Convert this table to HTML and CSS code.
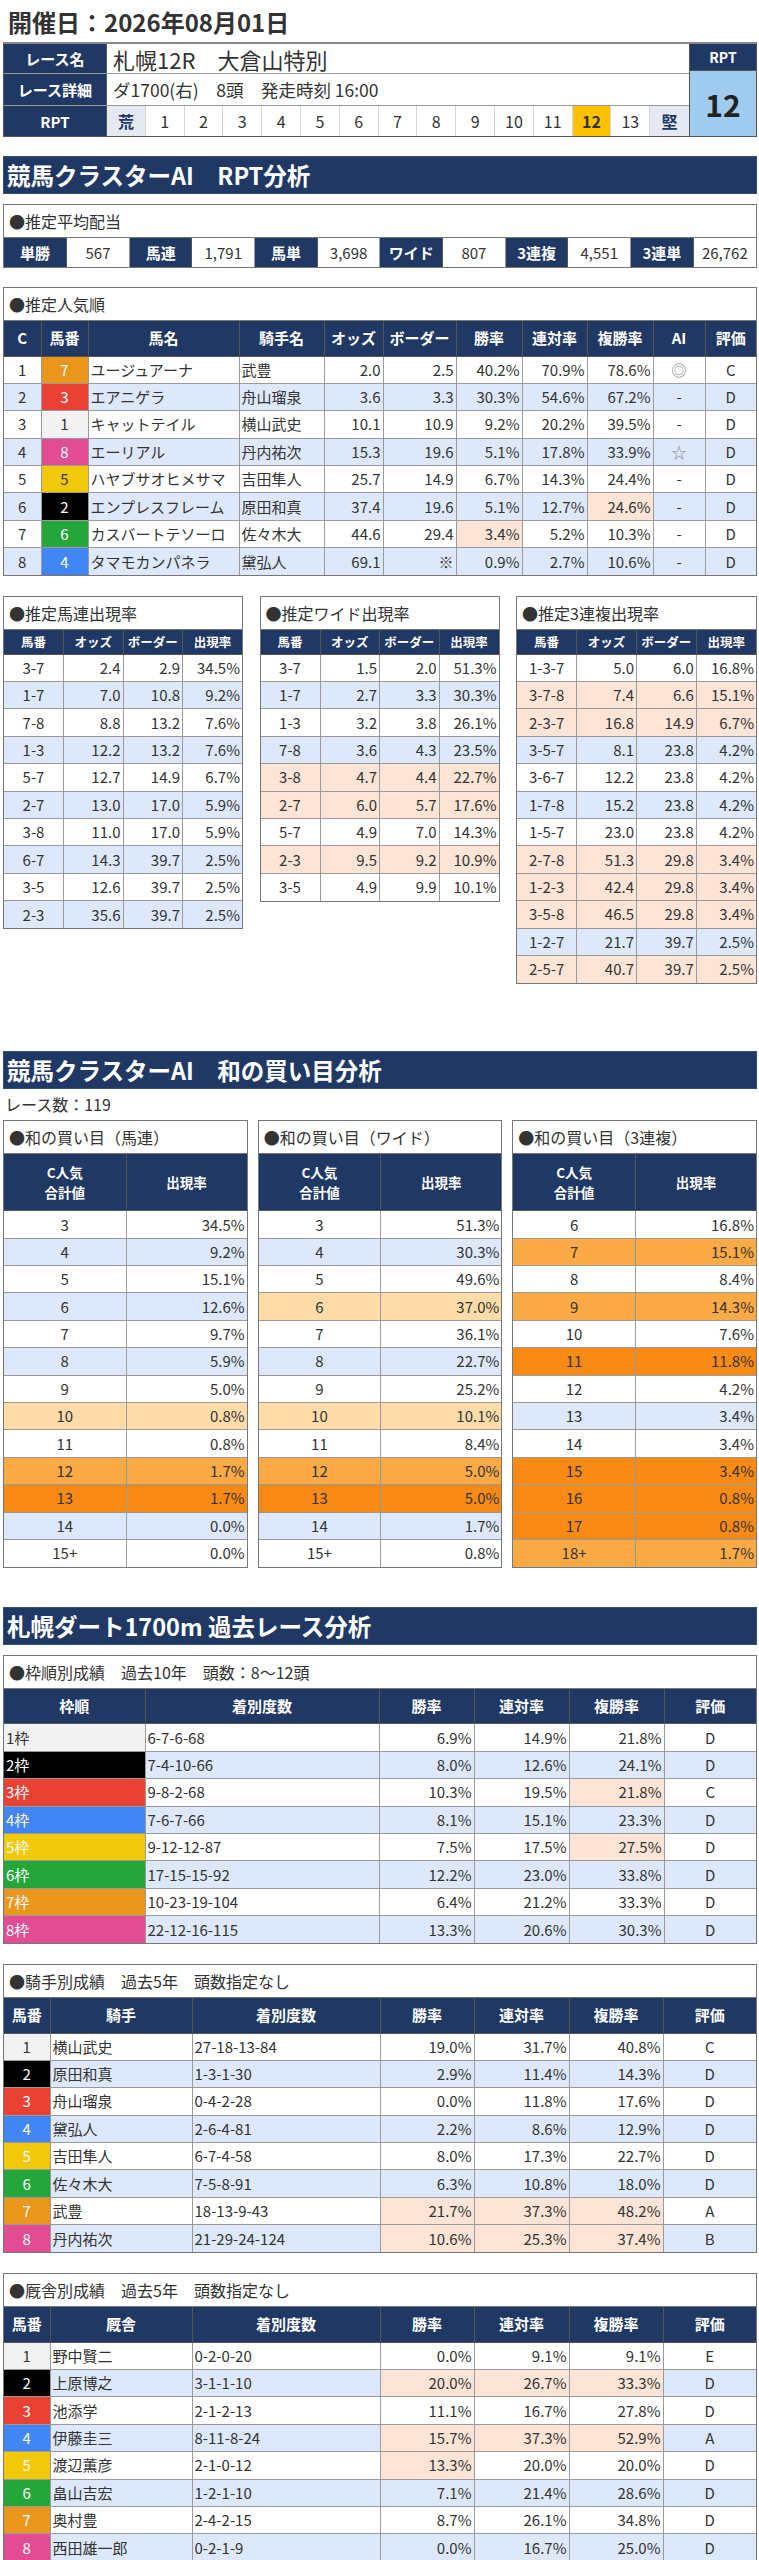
FILE: index.html
```html
<!DOCTYPE html>
<html lang="ja">
<head>
<meta charset="utf-8">
<title>札幌12R 大倉山特別</title>
<link rel="stylesheet" href="styles.css">
</head>
<body>
<div class="page">
  <h1 class="date">開催日：2026年08月01日</h1>

  <div class="race">
    <div class="race-main">
      <div class="rrow r-name"><div class="lbl">レース名</div><div class="val name">札幌12R　大倉山特別</div></div>
      <div class="rrow r-detail"><div class="lbl">レース詳細</div><div class="val">ダ1700(右)　8頭　発走時刻 16:00</div></div>
      <div class="rrow r-rpt"><div class="lbl">RPT</div>
        <div class="scale">
          <span class="end">荒</span><span>1</span><span>2</span><span>3</span><span>4</span><span>5</span><span>6</span><span>7</span><span>8</span><span>9</span><span>10</span><span>11</span><span class="cur">12</span><span>13</span><span class="end">堅</span>
        </div>
      </div>
    </div>
    <div class="rpt-box"><div class="rpt-h">RPT</div><div class="rpt-v">12</div></div>
  </div>

  <h2 class="sec sec1">競馬クラスターAI　RPT分析</h2>

  <div class="box mt10">
    <div class="box-title">●推定平均配当</div>
    <table class="tbl pay">
      <tr>
        <th>単勝</th><td>567</td><th>馬連</th><td>1,791</td><th>馬単</th><td>3,698</td>
        <th>ワイド</th><td>807</td><th>3連複</th><td>4,551</td><th>3連単</th><td>26,762</td>
      </tr>
    </table>
  </div>

  <div class="box mt19">
    <div class="box-title">●推定人気順</div>
    <table class="tbl pop">
      <colgroup><col style="width:37px"><col style="width:47px"><col style="width:151px"><col style="width:85px"><col style="width:59px"><col style="width:73px"><col style="width:66px"><col style="width:65px"><col style="width:66px"><col style="width:52px"><col></colgroup>
      <tr class="hd"><th>C</th><th>馬番</th><th>馬名</th><th>騎手名</th><th>オッズ</th><th class="nw">ボーダー</th><th>勝率</th><th>連対率</th><th>複勝率</th><th>AI</th><th>評価</th></tr>
      <tr><td class="c">1</td><td class="c w7">7</td><td class="l">ユージュアーナ</td><td class="l">武豊</td><td class="r">2.0</td><td class="r">2.5</td><td class="r">40.2%</td><td class="r">70.9%</td><td class="r">78.6%</td><td class="c mk">◎</td><td class="c">C</td></tr>
      <tr class="b"><td class="c">2</td><td class="c w3">3</td><td class="l">エアニゲラ</td><td class="l">舟山瑠泉</td><td class="r">3.6</td><td class="r">3.3</td><td class="r">30.3%</td><td class="r">54.6%</td><td class="r">67.2%</td><td class="c">-</td><td class="c">D</td></tr>
      <tr><td class="c">3</td><td class="c w1">1</td><td class="l">キャットテイル</td><td class="l">横山武史</td><td class="r">10.1</td><td class="r">10.9</td><td class="r">9.2%</td><td class="r">20.2%</td><td class="r">39.5%</td><td class="c">-</td><td class="c">D</td></tr>
      <tr class="b"><td class="c">4</td><td class="c w8">8</td><td class="l">エーリアル</td><td class="l">丹内祐次</td><td class="r">15.3</td><td class="r">19.6</td><td class="r">5.1%</td><td class="r">17.8%</td><td class="r">33.9%</td><td class="c mk">☆</td><td class="c">D</td></tr>
      <tr><td class="c">5</td><td class="c w5 dk">5</td><td class="l">ハヤブサオヒメサマ</td><td class="l">吉田隼人</td><td class="r">25.7</td><td class="r">14.9</td><td class="r">6.7%</td><td class="r">14.3%</td><td class="r">24.4%</td><td class="c">-</td><td class="c">D</td></tr>
      <tr class="b"><td class="c">6</td><td class="c w2">2</td><td class="l">エンプレスフレーム</td><td class="l">原田和真</td><td class="r">37.4</td><td class="r">19.6</td><td class="r">5.1%</td><td class="r">12.7%</td><td class="r p">24.6%</td><td class="c">-</td><td class="c">D</td></tr>
      <tr><td class="c">7</td><td class="c w6">6</td><td class="l">カスバートテソーロ</td><td class="l">佐々木大</td><td class="r">44.6</td><td class="r">29.4</td><td class="r p">3.4%</td><td class="r">5.2%</td><td class="r">10.3%</td><td class="c">-</td><td class="c">D</td></tr>
      <tr class="b"><td class="c">8</td><td class="c w4">4</td><td class="l">タマモカンパネラ</td><td class="l">黛弘人</td><td class="r">69.1</td><td class="r">※</td><td class="r">0.9%</td><td class="r">2.7%</td><td class="r">10.6%</td><td class="c">-</td><td class="c">D</td></tr>
    </table>
  </div>

  <div class="trio">
    <div class="box">
      <div class="box-title">●推定馬連出現率</div>
      <table class="tbl sm">
        <tr class="hd"><th>馬番</th><th>オッズ</th><th>ボーダー</th><th>出現率</th></tr>
        <tr><td class="c">3-7</td><td class="r">2.4</td><td class="r">2.9</td><td class="r">34.5%</td></tr>
        <tr class="b"><td class="c">1-7</td><td class="r">7.0</td><td class="r">10.8</td><td class="r">9.2%</td></tr>
        <tr><td class="c">7-8</td><td class="r">8.8</td><td class="r">13.2</td><td class="r">7.6%</td></tr>
        <tr class="b"><td class="c">1-3</td><td class="r">12.2</td><td class="r">13.2</td><td class="r">7.6%</td></tr>
        <tr><td class="c">5-7</td><td class="r">12.7</td><td class="r">14.9</td><td class="r">6.7%</td></tr>
        <tr class="b"><td class="c">2-7</td><td class="r">13.0</td><td class="r">17.0</td><td class="r">5.9%</td></tr>
        <tr><td class="c">3-8</td><td class="r">11.0</td><td class="r">17.0</td><td class="r">5.9%</td></tr>
        <tr class="b"><td class="c">6-7</td><td class="r">14.3</td><td class="r">39.7</td><td class="r">2.5%</td></tr>
        <tr><td class="c">3-5</td><td class="r">12.6</td><td class="r">39.7</td><td class="r">2.5%</td></tr>
        <tr class="b"><td class="c">2-3</td><td class="r">35.6</td><td class="r">39.7</td><td class="r">2.5%</td></tr>
      </table>
    </div>
    <div class="box">
      <div class="box-title">●推定ワイド出現率</div>
      <table class="tbl sm">
        <tr class="hd"><th>馬番</th><th>オッズ</th><th>ボーダー</th><th>出現率</th></tr>
        <tr><td class="c">3-7</td><td class="r">1.5</td><td class="r">2.0</td><td class="r">51.3%</td></tr>
        <tr class="b"><td class="c">1-7</td><td class="r">2.7</td><td class="r">3.3</td><td class="r">30.3%</td></tr>
        <tr><td class="c">1-3</td><td class="r">3.2</td><td class="r">3.8</td><td class="r">26.1%</td></tr>
        <tr class="b"><td class="c">7-8</td><td class="r">3.6</td><td class="r">4.3</td><td class="r">23.5%</td></tr>
        <tr class="p"><td class="c">3-8</td><td class="r">4.7</td><td class="r">4.4</td><td class="r">22.7%</td></tr>
        <tr class="p"><td class="c">2-7</td><td class="r">6.0</td><td class="r">5.7</td><td class="r">17.6%</td></tr>
        <tr><td class="c">5-7</td><td class="r">4.9</td><td class="r">7.0</td><td class="r">14.3%</td></tr>
        <tr class="p"><td class="c">2-3</td><td class="r">9.5</td><td class="r">9.2</td><td class="r">10.9%</td></tr>
        <tr><td class="c">3-5</td><td class="r">4.9</td><td class="r">9.9</td><td class="r">10.1%</td></tr>
      </table>
    </div>
    <div class="box">
      <div class="box-title">●推定3連複出現率</div>
      <table class="tbl sm">
        <tr class="hd"><th>馬番</th><th>オッズ</th><th>ボーダー</th><th>出現率</th></tr>
        <tr><td class="c">1-3-7</td><td class="r">5.0</td><td class="r">6.0</td><td class="r">16.8%</td></tr>
        <tr class="p"><td class="c">3-7-8</td><td class="r">7.4</td><td class="r">6.6</td><td class="r">15.1%</td></tr>
        <tr class="p"><td class="c">2-3-7</td><td class="r">16.8</td><td class="r">14.9</td><td class="r">6.7%</td></tr>
        <tr class="b"><td class="c">3-5-7</td><td class="r">8.1</td><td class="r">23.8</td><td class="r">4.2%</td></tr>
        <tr><td class="c">3-6-7</td><td class="r">12.2</td><td class="r">23.8</td><td class="r">4.2%</td></tr>
        <tr class="b"><td class="c">1-7-8</td><td class="r">15.2</td><td class="r">23.8</td><td class="r">4.2%</td></tr>
        <tr><td class="c">1-5-7</td><td class="r">23.0</td><td class="r">23.8</td><td class="r">4.2%</td></tr>
        <tr class="p"><td class="c">2-7-8</td><td class="r">51.3</td><td class="r">29.8</td><td class="r">3.4%</td></tr>
        <tr class="p"><td class="c">1-2-3</td><td class="r">42.4</td><td class="r">29.8</td><td class="r">3.4%</td></tr>
        <tr class="p"><td class="c">3-5-8</td><td class="r">46.5</td><td class="r">29.8</td><td class="r">3.4%</td></tr>
        <tr class="b"><td class="c">1-2-7</td><td class="r">21.7</td><td class="r">39.7</td><td class="r">2.5%</td></tr>
        <tr class="p"><td class="c">2-5-7</td><td class="r">40.7</td><td class="r">39.7</td><td class="r">2.5%</td></tr>
      </table>
    </div>
  </div>

  <h2 class="sec sec2">競馬クラスターAI　和の買い目分析</h2>
  <div class="count">レース数：119</div>

  <div class="wa">
    <div class="box">
      <div class="box-title">●和の買い目（馬連）</div>
      <table class="tbl sum">
        <colgroup><col style="width:122px"><col></colgroup>
        <tr class="hd"><th>C人気<br>合計値</th><th>出現率</th></tr>
        <tr><td class="c">3</td><td class="r">34.5%</td></tr>
        <tr class="b"><td class="c">4</td><td class="r">9.2%</td></tr>
        <tr><td class="c">5</td><td class="r">15.1%</td></tr>
        <tr class="b"><td class="c">6</td><td class="r">12.6%</td></tr>
        <tr><td class="c">7</td><td class="r">9.7%</td></tr>
        <tr class="b"><td class="c">8</td><td class="r">5.9%</td></tr>
        <tr><td class="c">9</td><td class="r">5.0%</td></tr>
        <tr class="o1"><td class="c">10</td><td class="r">0.8%</td></tr>
        <tr><td class="c">11</td><td class="r">0.8%</td></tr>
        <tr class="o2"><td class="c">12</td><td class="r">1.7%</td></tr>
        <tr class="o3"><td class="c">13</td><td class="r">1.7%</td></tr>
        <tr class="b"><td class="c">14</td><td class="r">0.0%</td></tr>
        <tr><td class="c">15+</td><td class="r">0.0%</td></tr>
      </table>
    </div>
    <div class="box">
      <div class="box-title">●和の買い目（ワイド）</div>
      <table class="tbl sum">
        <colgroup><col style="width:122px"><col></colgroup>
        <tr class="hd"><th>C人気<br>合計値</th><th>出現率</th></tr>
        <tr><td class="c">3</td><td class="r">51.3%</td></tr>
        <tr class="b"><td class="c">4</td><td class="r">30.3%</td></tr>
        <tr><td class="c">5</td><td class="r">49.6%</td></tr>
        <tr class="o1"><td class="c">6</td><td class="r">37.0%</td></tr>
        <tr><td class="c">7</td><td class="r">36.1%</td></tr>
        <tr class="b"><td class="c">8</td><td class="r">22.7%</td></tr>
        <tr><td class="c">9</td><td class="r">25.2%</td></tr>
        <tr class="o1"><td class="c">10</td><td class="r">10.1%</td></tr>
        <tr><td class="c">11</td><td class="r">8.4%</td></tr>
        <tr class="o2"><td class="c">12</td><td class="r">5.0%</td></tr>
        <tr class="o3"><td class="c">13</td><td class="r">5.0%</td></tr>
        <tr class="b"><td class="c">14</td><td class="r">1.7%</td></tr>
        <tr><td class="c">15+</td><td class="r">0.8%</td></tr>
      </table>
    </div>
    <div class="box">
      <div class="box-title">●和の買い目（3連複）</div>
      <table class="tbl sum">
        <colgroup><col style="width:122px"><col></colgroup>
        <tr class="hd"><th>C人気<br>合計値</th><th>出現率</th></tr>
        <tr><td class="c">6</td><td class="r">16.8%</td></tr>
        <tr class="o2"><td class="c">7</td><td class="r">15.1%</td></tr>
        <tr><td class="c">8</td><td class="r">8.4%</td></tr>
        <tr class="o2"><td class="c">9</td><td class="r">14.3%</td></tr>
        <tr><td class="c">10</td><td class="r">7.6%</td></tr>
        <tr class="o3"><td class="c">11</td><td class="r">11.8%</td></tr>
        <tr><td class="c">12</td><td class="r">4.2%</td></tr>
        <tr class="b"><td class="c">13</td><td class="r">3.4%</td></tr>
        <tr><td class="c">14</td><td class="r">3.4%</td></tr>
        <tr class="o3"><td class="c">15</td><td class="r">3.4%</td></tr>
        <tr class="o3"><td class="c">16</td><td class="r">0.8%</td></tr>
        <tr class="o3"><td class="c">17</td><td class="r">0.8%</td></tr>
        <tr class="o2"><td class="c">18+</td><td class="r">1.7%</td></tr>
      </table>
    </div>
  </div>

  <h2 class="sec sec3">札幌ダート1700m 過去レース分析</h2>

  <div class="box mt10">
    <div class="box-title">●枠順別成績　過去10年　頭数：8～12頭</div>
    <table class="tbl past">
      <colgroup><col style="width:141px"><col style="width:234px"><col style="width:95px"><col style="width:95px"><col style="width:95px"><col></colgroup>
      <tr class="hd"><th>枠順</th><th>着別度数</th><th>勝率</th><th>連対率</th><th>複勝率</th><th>評価</th></tr>
      <tr><td class="l w1">1枠</td><td class="l">6-7-6-68</td><td class="r">6.9%</td><td class="r">14.9%</td><td class="r">21.8%</td><td class="c">D</td></tr>
      <tr class="b"><td class="l w2">2枠</td><td class="l">7-4-10-66</td><td class="r">8.0%</td><td class="r">12.6%</td><td class="r">24.1%</td><td class="c">D</td></tr>
      <tr><td class="l w3">3枠</td><td class="l">9-8-2-68</td><td class="r">10.3%</td><td class="r">19.5%</td><td class="r p">21.8%</td><td class="c">C</td></tr>
      <tr class="b"><td class="l w4">4枠</td><td class="l">7-6-7-66</td><td class="r">8.1%</td><td class="r">15.1%</td><td class="r">23.3%</td><td class="c">D</td></tr>
      <tr><td class="l w5">5枠</td><td class="l">9-12-12-87</td><td class="r">7.5%</td><td class="r">17.5%</td><td class="r p">27.5%</td><td class="c">D</td></tr>
      <tr class="b"><td class="l w6">6枠</td><td class="l">17-15-15-92</td><td class="r">12.2%</td><td class="r">23.0%</td><td class="r">33.8%</td><td class="c">D</td></tr>
      <tr><td class="l w7">7枠</td><td class="l">10-23-19-104</td><td class="r">6.4%</td><td class="r">21.2%</td><td class="r">33.3%</td><td class="c">D</td></tr>
      <tr class="b"><td class="l w8">8枠</td><td class="l">22-12-16-115</td><td class="r">13.3%</td><td class="r">20.6%</td><td class="r">30.3%</td><td class="c">D</td></tr>
    </table>
  </div>

  <div class="box mt20">
    <div class="box-title">●騎手別成績　過去5年　頭数指定なし</div>
    <table class="tbl past">
      <colgroup><col style="width:46px"><col style="width:142px"><col style="width:188px"><col style="width:94px"><col style="width:95px"><col style="width:94px"><col></colgroup>
      <tr class="hd"><th>馬番</th><th>騎手</th><th>着別度数</th><th>勝率</th><th>連対率</th><th>複勝率</th><th>評価</th></tr>
      <tr><td class="c w1">1</td><td class="l">横山武史</td><td class="l">27-18-13-84</td><td class="r">19.0%</td><td class="r">31.7%</td><td class="r">40.8%</td><td class="c">C</td></tr>
      <tr class="b"><td class="c w2">2</td><td class="l">原田和真</td><td class="l">1-3-1-30</td><td class="r">2.9%</td><td class="r">11.4%</td><td class="r">14.3%</td><td class="c">D</td></tr>
      <tr><td class="c w3">3</td><td class="l">舟山瑠泉</td><td class="l">0-4-2-28</td><td class="r">0.0%</td><td class="r">11.8%</td><td class="r">17.6%</td><td class="c">D</td></tr>
      <tr class="b"><td class="c w4">4</td><td class="l">黛弘人</td><td class="l">2-6-4-81</td><td class="r">2.2%</td><td class="r">8.6%</td><td class="r">12.9%</td><td class="c">D</td></tr>
      <tr><td class="c w5">5</td><td class="l">吉田隼人</td><td class="l">6-7-4-58</td><td class="r">8.0%</td><td class="r">17.3%</td><td class="r">22.7%</td><td class="c">D</td></tr>
      <tr class="b"><td class="c w6">6</td><td class="l">佐々木大</td><td class="l">7-5-8-91</td><td class="r">6.3%</td><td class="r">10.8%</td><td class="r">18.0%</td><td class="c">D</td></tr>
      <tr><td class="c w7">7</td><td class="l">武豊</td><td class="l">18-13-9-43</td><td class="r p">21.7%</td><td class="r p">37.3%</td><td class="r p">48.2%</td><td class="c">A</td></tr>
      <tr class="b"><td class="c w8">8</td><td class="l">丹内祐次</td><td class="l">21-29-24-124</td><td class="r p">10.6%</td><td class="r p">25.3%</td><td class="r p">37.4%</td><td class="c">B</td></tr>
    </table>
  </div>

  <div class="box mt20">
    <div class="box-title">●厩舎別成績　過去5年　頭数指定なし</div>
    <table class="tbl past">
      <colgroup><col style="width:46px"><col style="width:142px"><col style="width:188px"><col style="width:94px"><col style="width:95px"><col style="width:94px"><col></colgroup>
      <tr class="hd"><th>馬番</th><th>厩舎</th><th>着別度数</th><th>勝率</th><th>連対率</th><th>複勝率</th><th>評価</th></tr>
      <tr><td class="c w1">1</td><td class="l">野中賢二</td><td class="l">0-2-0-20</td><td class="r">0.0%</td><td class="r">9.1%</td><td class="r">9.1%</td><td class="c">E</td></tr>
      <tr class="b"><td class="c w2">2</td><td class="l">上原博之</td><td class="l">3-1-1-10</td><td class="r p">20.0%</td><td class="r p">26.7%</td><td class="r p">33.3%</td><td class="c">D</td></tr>
      <tr><td class="c w3">3</td><td class="l">池添学</td><td class="l">2-1-2-13</td><td class="r">11.1%</td><td class="r">16.7%</td><td class="r">27.8%</td><td class="c">D</td></tr>
      <tr class="b"><td class="c w4">4</td><td class="l">伊藤圭三</td><td class="l">8-11-8-24</td><td class="r p">15.7%</td><td class="r p">37.3%</td><td class="r p">52.9%</td><td class="c">A</td></tr>
      <tr><td class="c w5">5</td><td class="l">渡辺薫彦</td><td class="l">2-1-0-12</td><td class="r p">13.3%</td><td class="r">20.0%</td><td class="r">20.0%</td><td class="c">D</td></tr>
      <tr class="b"><td class="c w6">6</td><td class="l">畠山吉宏</td><td class="l">1-2-1-10</td><td class="r">7.1%</td><td class="r">21.4%</td><td class="r">28.6%</td><td class="c">D</td></tr>
      <tr><td class="c w7">7</td><td class="l">奥村豊</td><td class="l">2-4-2-15</td><td class="r">8.7%</td><td class="r">26.1%</td><td class="r">34.8%</td><td class="c">D</td></tr>
      <tr class="b"><td class="c w8">8</td><td class="l">西田雄一郎</td><td class="l">0-2-1-9</td><td class="r">0.0%</td><td class="r">16.7%</td><td class="r">25.0%</td><td class="c">D</td></tr>
    </table>
  </div>
</div>
</body>
</html>
```

FILE: styles.css
```css
* { box-sizing: border-box; }

body {
  margin: 0;
  background: #fff;
  color: #333;
  font-family: "Noto Sans CJK JP", "Noto Sans", sans-serif;
}

.page {
  width: 754px;
  margin-left: 3px;
}

.date {
  margin: 0;
  height: 42px;
  padding-left: 5px;
  font-size: 24px;
  line-height: 44px;
  font-weight: bold;
  color: #333;
}

/* race info */
.race {
  display: flex;
  height: 95px;
  border-top: 2px solid #8a8a8a;
  border-bottom: 1px solid #555;
  border-left: 1px solid #555;
  border-right: 1px solid #555;
}
.race-main {
  flex: 1;
  display: flex;
  flex-direction: column;
}
.rrow { display: flex; }
.r-name { height: 30px; border-bottom: 1px solid #999; }
.r-detail { height: 32px; border-bottom: 1px solid #999; }
.r-rpt { flex: 1; }
.lbl {
  width: 103px;
  flex: none;
  background: #203864;
  color: #fff;
  font-weight: bold;
  font-size: 15px;
  display: flex;
  align-items: center;
  justify-content: center;
  border-right: 1px solid #555;
}
.val {
  flex: 1;
  display: flex;
  align-items: center;
  padding-left: 6px;
  font-size: 17.5px;
}
.val.name { font-size: 22px; }
.scale {
  flex: 1;
  display: grid;
  grid-template-columns: repeat(15, 1fr);
}
.scale span {
  display: flex;
  align-items: center;
  justify-content: center;
  font-size: 16px;
  border-right: 1px solid #d4d4d4;
}
.scale span:last-child { border-right: 0; }
.scale .end { background: #e4e9f2; color: #203864; font-weight: bold; }
.scale .cur { background: #ffc000; font-weight: bold; }
.rpt-box {
  width: 67px;
  flex: none;
  display: flex;
  flex-direction: column;
  border-left: 1px solid #555;
}
.rpt-h {
  height: 27px;
  background: #203864;
  color: #fff;
  font-weight: bold;
  font-size: 14px;
  display: flex;
  align-items: center;
  justify-content: center;
  border-bottom: 1px solid #555;
}
.rpt-v {
  flex: 1;
  background: #9fcbee;
  font-weight: bold;
  font-size: 30px;
  color: #222;
  display: flex;
  align-items: center;
  justify-content: center;
}

/* section headers */
.sec {
  margin: 0;
  height: 38px;
  line-height: 36px;
  background: #203864;
  color: #fff;
  font-size: 23.5px;
  font-weight: bold;
  padding-left: 3px;
  border: 1px solid #3a4f78;
  white-space: nowrap;
}
.sec1 { margin-top: 19px; }
.sec2 { margin-top: 67px; }
.sec3 { margin-top: 39px; }

.count {
  height: 31px;
  line-height: 31px;
  font-size: 16px;
  padding-left: 2px;
}

/* boxes */
.box {
  border: 1px solid #777;
  background: #fff;
}
.mt10 { margin-top: 10px; }
.mt19 { margin-top: 19px; }
.mt20 { margin-top: 20px; }
.box-title {
  height: 33px;
  line-height: 33px;
  font-size: 16px;
  padding-left: 5px;
  border-bottom: 1px solid #777;
  white-space: nowrap;
}

.tbl {
  width: 100%;
  border-collapse: collapse;
  table-layout: fixed;
  border-style: hidden;
}
.tbl th, .tbl td {
  border: 1px solid #9a9a9a;
  padding: 0 3px;
  line-height: 20px;
  white-space: nowrap;
  overflow: hidden;
}
.tbl th {
  background: #203864;
  color: #fff;
  font-weight: bold;
  border-color: #555;
  text-align: center;
}
.tbl td { font-size: 15px; }
.tbl tr { height: 27.4px; }
.c { text-align: center; }
.r { text-align: right; }
.l { text-align: left; }

/* row tints */
.tbl tr.b td { background: #dde9fb; }
.tbl tr.p td { background: #fce4d6; }
.tbl tr.o1 td { background: #fddcaa; }
.tbl tr.o2 td { background: #fbaa45; }
.tbl tr.o3 td { background: #fa8a16; }

/* cell tints (must beat row tints) */
.tbl tr td.p { background: #fce4d6; }
.tbl tr td.w1 { background: #f2f2f2; color: #333; }
.tbl tr td.w2 { background: #000; color: #fff; }
.tbl tr td.w3 { background: #e94234; color: #fff; }
.tbl tr td.w4 { background: #4285f4; color: #fff; }
.tbl tr td.w5 { background: #f2c90a; color: #fff; }
.tbl tr td.w5.dk { color: #333; }
.tbl tr td.w6 { background: #24a63a; color: #fff; }
.tbl tr td.w7 { background: #e8961c; color: #fff; }
.tbl tr td.w8 { background: #e24c93; color: #fff; }

.mk { color: #888; }

/* payout */
.pay tr { height: 29px; }
.pay th { font-size: 15px; padding: 0; }
.pay td { text-align: center; font-size: 15px; padding: 0; }

/* popularity */
.pop tr.hd { height: 35px; }
.pop th { font-size: 15px; padding: 0; }
.pop td { padding: 0 2px; }

/* three small tables */
.trio {
  margin-top: 20px;
  display: grid;
  grid-template-columns: 240px 240px 241px;
  justify-content: space-between;
  align-items: start;
}
.sm tr.hd { height: 24px; }
.sm th { font-size: 12.5px; padding: 0; }
.sm td { padding: 0 2px; }

/* sum tables */
.wa {
  display: grid;
  grid-template-columns: 1fr 1fr 1fr;
  column-gap: 10px;
  align-items: start;
}
.sum tr.hd { height: 57px; }
.sum th { font-size: 13.5px; line-height: 20px; }
.sum td { padding: 0 2px; }

/* past races */
.past tr.hd { height: 35px; }
.past th { font-size: 15px; padding: 0; }
.past td { padding: 0 2px; }
```
